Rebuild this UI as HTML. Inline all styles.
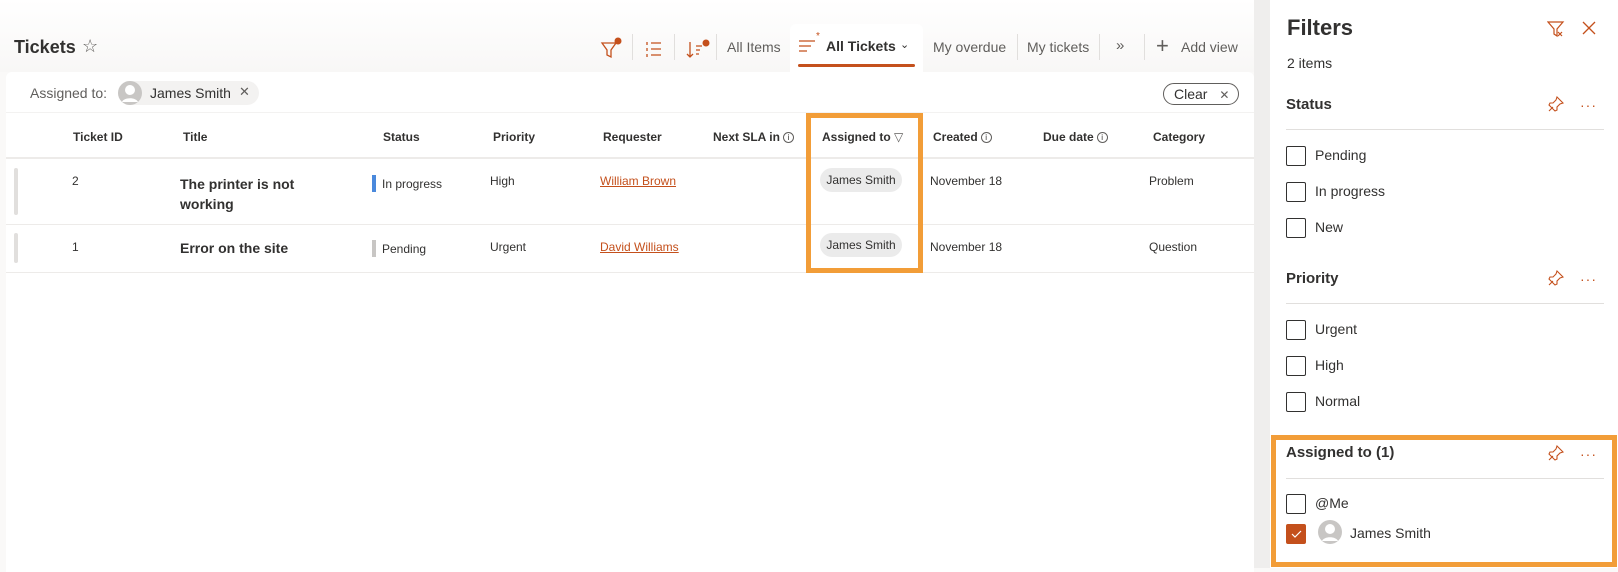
<!DOCTYPE html>
<html><head><meta charset="utf-8"><style>
*{box-sizing:border-box;margin:0;padding:0}
body{width:1618px;height:568px;overflow:hidden;position:relative;font-family:"Liberation Sans",sans-serif;color:#323130;background:#faf9f8}
.a{position:absolute;white-space:nowrap}
.hd{font-size:12px;color:#323130;font-weight:600}
.c{font-size:12px}
.ti{font-size:14px;font-weight:bold;color:#323130}
.sep{position:absolute;width:1px;height:26px;background:#e1dfdd;top:34px}
.tab{font-size:14px;color:#605e5c}
.chip{position:absolute;background:#ebebeb;border-radius:12px;height:24px;font-size:12px;line-height:24px;text-align:center}
.cb{position:absolute;width:20px;height:20px;border:1px solid #323130;border-radius:2px;left:1286px}
.pl{font-size:14px;color:#323130;left:1315px}
.ph{font-size:15px;font-weight:bold;left:1286px;color:#323130}
.line{position:absolute;height:1px;background:#e1dfdd;left:1286px;width:318px}
.info{display:inline-block;width:11px;height:11px;border:1px solid #605e5c;border-radius:50%;font-size:8px;line-height:9px;text-align:center;vertical-align:middle;margin-left:3px;font-weight:normal}
.dots{position:absolute;color:#c4501c;font-size:14px;letter-spacing:1px}
</style></head><body>
<div class="a" style="left:0;top:0;width:1270px;height:72px;background:linear-gradient(#fff,#f8f7f6)"></div>
<div class="a" style="left:14px;top:37px;font-size:18px;font-weight:bold;color:#323130">Tickets</div>
<div class="a" style="left:82px;top:36px;font-size:18px;color:#605e5c">☆</div>

<svg class="a" style="left:600px;top:36px" width="24" height="26" viewBox="0 0 24 26"><path d="M2 7h14l-5 7v7l-4-2v-5z" fill="none" stroke="#c4501c" stroke-width="1.3"/><circle cx="18" cy="5" r="3.5" fill="#c4501c"/></svg>
<div class="sep" style="left:632px"></div>
<svg class="a" style="left:645px;top:40px" width="18" height="18"><g stroke="#c4501c" stroke-width="1.3" fill="none"><path d="M6 3h10M6 9h10M6 15h10M2 2v3M2 8v3M2 14v3"/></g></svg>
<div class="sep" style="left:674px"></div>
<svg class="a" style="left:686px;top:36px" width="26" height="26"><g stroke="#c4501c" stroke-width="1.3" fill="none"><path d="M4 6v15M1 18l3 3 3-3M10 10h6M10 14h4M10 18h3"/></g><circle cx="20" cy="7" r="3.5" fill="#c4501c"/></svg>
<div class="sep" style="left:716px"></div>
<div class="a tab" style="left:727px;top:39px">All Items</div>
<div class="a" style="left:790px;top:24px;width:133px;height:48px;background:#fff;border-radius:6px 6px 0 0"></div>
<svg class="a" style="left:798px;top:30px" width="26" height="24"><g stroke="#c4501c" stroke-width="1.3"><path d="M1 11h16M1 16h12M1 21h8"/></g><text x="18" y="9" fill="#c4501c" font-size="10" font-family="Liberation Sans">*</text></svg>
<div class="a" style="left:826px;top:38px;font-size:14px;font-weight:bold">All Tickets</div>
<div class="a" style="left:900px;top:38px;font-size:11px;color:#323130">⌄</div>
<div class="a" style="left:798px;top:64px;width:117px;height:3px;background:#c4501c;border-radius:2px"></div>
<div class="a tab" style="left:933px;top:39px">My overdue</div>
<div class="sep" style="left:1017px"></div>
<div class="a tab" style="left:1027px;top:39px">My tickets</div>
<div class="sep" style="left:1099px"></div>
<div class="a tab" style="left:1116px;top:37px;font-size:15px">»</div>
<div class="sep" style="left:1144px"></div>
<div class="a tab" style="left:1156px;top:33px;font-size:22px;font-weight:200">+</div>
<div class="a tab" style="left:1181px;top:39px">Add view</div>

<div class="a" style="left:6px;top:72px;width:1248px;height:500px;background:#fff;border-radius:6px 6px 0 0"></div>
<div class="a" style="left:1254px;top:0;width:16px;height:568px;background:#efeeed"></div>
<div class="a" style="left:30px;top:85px;font-size:14px;color:#605e5c">Assigned to:</div>
<div class="a" style="left:118px;top:81px;width:141px;height:24px;border-radius:12px;background:#f3f2f1"></div>
<svg class="a" style="left:118px;top:81px" width="24" height="24"><circle cx="12" cy="12" r="12" fill="#c8c6c4"/><circle cx="12" cy="9" r="5" fill="#fff"/><path d="M4 21c2-5 14-5 16 0" fill="#fff"/></svg>
<div class="a" style="left:150px;top:85px;font-size:14px;color:#323130">James Smith</div>
<div class="a" style="left:239px;top:84px;font-size:13px;color:#605e5c">✕</div>
<div class="a" style="left:1163px;top:83px;width:76px;height:22px;border:1px solid #605e5c;border-radius:11px;font-size:14px;line-height:20px;padding-left:10px;color:#323130">Clear <span style="margin-left:8px;font-size:12px;color:#605e5c">✕</span></div>
<div class="a" style="left:6px;top:112px;width:1248px;height:1px;background:#f3f2f1"></div>

<div class="a hd" style="left:73px;top:130px">Ticket ID</div>
<div class="a hd" style="left:183px;top:130px">Title</div>
<div class="a hd" style="left:383px;top:130px">Status</div>
<div class="a hd" style="left:493px;top:130px">Priority</div>
<div class="a hd" style="left:603px;top:130px">Requester</div>
<div class="a hd" style="left:713px;top:130px">Next SLA in<span class="info">i</span></div>
<div class="a hd" style="left:822px;top:130px">Assigned to <span style="color:#605e5c;font-weight:normal">▽</span></div>
<div class="a hd" style="left:933px;top:130px">Created<span class="info">i</span></div>
<div class="a hd" style="left:1043px;top:130px">Due date<span class="info">i</span></div>
<div class="a hd" style="left:1153px;top:130px">Category</div>
<div class="a" style="left:6px;top:157px;width:1248px;height:2px;background:#edebe9"></div>

<div class="a" style="left:14px;top:168px;width:4px;height:47px;background:#e1dfdd;border-radius:2px"></div>
<div class="a c" style="left:72px;top:174px">2</div>
<div class="a ti" style="left:180px;top:174px;line-height:20px">The printer is not<br>working</div>
<div class="a" style="left:372px;top:175px;width:4px;height:17px;background:#4a89dc"></div>
<div class="a c" style="left:382px;top:177px">In progress</div>
<div class="a c" style="left:490px;top:174px">High</div>
<div class="a c" style="left:600px;top:174px;color:#c4501c;text-decoration:underline">William Brown</div>
<div class="chip" style="left:820px;top:168px;width:82px">James Smith</div>
<div class="a c" style="left:930px;top:174px">November 18</div>
<div class="a c" style="left:1149px;top:174px">Problem</div>
<div class="a" style="left:6px;top:224px;width:1248px;height:1px;background:#edebe9"></div>

<div class="a" style="left:14px;top:233px;width:4px;height:30px;background:#e1dfdd;border-radius:2px"></div>
<div class="a c" style="left:72px;top:240px">1</div>
<div class="a ti" style="left:180px;top:240px">Error on the site</div>
<div class="a" style="left:372px;top:240px;width:4px;height:17px;background:#c8c6c4"></div>
<div class="a c" style="left:382px;top:242px">Pending</div>
<div class="a c" style="left:490px;top:240px">Urgent</div>
<div class="a c" style="left:600px;top:240px;color:#c4501c;text-decoration:underline">David Williams</div>
<div class="chip" style="left:820px;top:233px;width:82px">James Smith</div>
<div class="a c" style="left:930px;top:240px">November 18</div>
<div class="a c" style="left:1149px;top:240px">Question</div>
<div class="a" style="left:6px;top:272px;width:1248px;height:1px;background:#edebe9"></div>

<div class="a" style="left:806px;top:113px;width:117px;height:160px;border:5px solid #f29d38"></div>

<div class="a" style="left:1270px;top:0;width:348px;height:568px;background:#fff"></div>
<div class="a" style="left:1287px;top:15px;font-size:22px;font-weight:bold;color:#323130">Filters</div>
<svg class="a" style="left:1547px;top:20px" width="18" height="18"><g stroke="#c4501c" stroke-width="1.2" fill="none"><path d="M1 2h15l-6 7v7l-3-2V9z"/><path d="M11 12l4 4M15 12l-4 4"/></g></svg>
<svg class="a" style="left:1582px;top:21px" width="14" height="14"><path d="M1 1l12 12M13 1L1 13" stroke="#c4501c" stroke-width="1.3"/></svg>
<div class="a" style="left:1287px;top:55px;font-size:14px">2 items</div>

<div class="a ph" style="top:96px">Status</div>
<div class="line" style="top:129px"></div>
<div class="cb" style="top:146px"></div><div class="a pl" style="top:147px">Pending</div>
<div class="cb" style="top:182px"></div><div class="a pl" style="top:183px">In progress</div>
<div class="cb" style="top:218px"></div><div class="a pl" style="top:219px">New</div>

<div class="a ph" style="top:270px">Priority</div>
<div class="line" style="top:303px"></div>
<div class="cb" style="top:320px"></div><div class="a pl" style="top:321px">Urgent</div>
<div class="cb" style="top:356px"></div><div class="a pl" style="top:357px">High</div>
<div class="cb" style="top:392px"></div><div class="a pl" style="top:393px">Normal</div>

<div class="a ph" style="top:444px">Assigned to (1)</div>
<div class="line" style="top:478px"></div>
<div class="cb" style="top:494px"></div><div class="a pl" style="top:495px">@Me</div>
<div class="cb" style="top:524px;background:#c4501c;border-color:#c4501c"></div>
<svg class="a" style="left:1290px;top:528px" width="12" height="12"><path d="M2 6l3 3 6-6" stroke="#fff" stroke-width="1.2" fill="none"/></svg>
<svg class="a" style="left:1318px;top:520px" width="24" height="24"><circle cx="12" cy="12" r="12" fill="#c8c6c4"/><circle cx="12" cy="9" r="5" fill="#fff"/><path d="M4 21c2-5 14-5 16 0" fill="#fff"/></svg>
<div class="a pl" style="left:1350px;top:525px">James Smith</div>

<svg class="a" style="left:1548px;top:96px" width="16" height="16"><path d="M9 1l6 6-3 1-3 3 0 3-2 1-6-6 1-2 3 0 3-3zM5 11l-4 4" stroke="#c4501c" stroke-width="1.1" fill="none"/></svg>
<div class="dots" style="left:1580px;top:97px">···</div>
<svg class="a" style="left:1548px;top:270px" width="16" height="16"><path d="M9 1l6 6-3 1-3 3 0 3-2 1-6-6 1-2 3 0 3-3zM5 11l-4 4" stroke="#c4501c" stroke-width="1.1" fill="none"/></svg>
<div class="dots" style="left:1580px;top:271px">···</div>
<svg class="a" style="left:1548px;top:445px" width="16" height="16"><path d="M9 1l6 6-3 1-3 3 0 3-2 1-6-6 1-2 3 0 3-3zM5 11l-4 4" stroke="#c4501c" stroke-width="1.1" fill="none"/></svg>
<div class="dots" style="left:1580px;top:446px">···</div>

<div class="a" style="left:1271px;top:435px;width:346px;height:132px;border:5px solid #f29d38"></div>
</body></html>
